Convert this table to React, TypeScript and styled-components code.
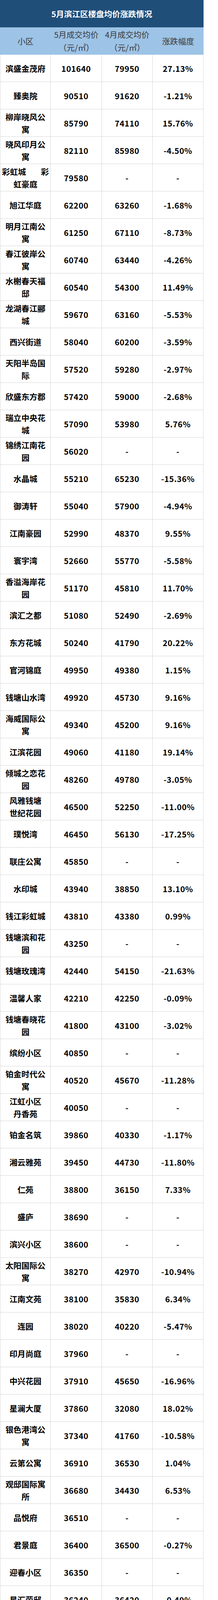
import React from 'react'
import styled, { createGlobalStyle } from 'styled-components'

const GlobalStyle = createGlobalStyle`
  html, body {
    margin: 0;
    padding: 0;
    background: #fff;
  }
  body {
    font-family: "Noto Sans CJK SC", "Noto Sans", sans-serif;
  }
  * {
    box-sizing: border-box;
  }
`

type Row = [string, string, string, string]

// name lines are split by \n; a full-width space spreads a line edge to edge
const rows: Row[] = [
  ['滨盛金茂府', '101640', '79950', '27.13%'],
  ['臻奥院', '90510', '91620', '-1.21%'],
  ['柳岸晓风公\n寓', '85790', '74110', '15.76%'],
  ['晓风印月公\n寓', '82110', '85980', '-4.50%'],
  ['彩虹城　彩\n虹豪庭', '79580', '-', '-'],
  ['旭江华庭', '62200', '63260', '-1.68%'],
  ['明月江南公\n寓', '61250', '67110', '-8.73%'],
  ['春江彼岸公\n寓', '60740', '63440', '-4.26%'],
  ['水榭春天福\n邸', '60540', '54300', '11.49%'],
  ['龙湖春江郦\n城', '59670', '63160', '-5.53%'],
  ['西兴街道', '58040', '60200', '-3.59%'],
  ['天阳半岛国\n际', '57520', '59280', '-2.97%'],
  ['欣盛东方郡', '57420', '59000', '-2.68%'],
  ['瑞立中央花\n城', '57090', '53980', '5.76%'],
  ['锦绣江南花\n园', '56020', '-', '-'],
  ['水晶城', '55210', '65230', '-15.36%'],
  ['御涛轩', '55040', '57900', '-4.94%'],
  ['江南豪园', '52990', '48370', '9.55%'],
  ['寰宇湾', '52660', '55770', '-5.58%'],
  ['香溢海岸花\n园', '51170', '45810', '11.70%'],
  ['滨汇之都', '51080', '52490', '-2.69%'],
  ['东方花城', '50240', '41790', '20.22%'],
  ['官河锦庭', '49950', '49380', '1.15%'],
  ['钱塘山水湾', '49920', '45730', '9.16%'],
  ['海威国际公\n寓', '49340', '45200', '9.16%'],
  ['江滨花园', '49060', '41180', '19.14%'],
  ['倾城之恋花\n园', '48260', '49780', '-3.05%'],
  ['风雅钱塘\n世纪花园', '46500', '52250', '-11.00%'],
  ['璞悦湾', '46450', '56130', '-17.25%'],
  ['联庄公寓', '45850', '-', '-'],
  ['水印城', '43940', '38850', '13.10%'],
  ['钱江彩虹城', '43810', '43380', '0.99%'],
  ['钱塘滨和花\n园', '43250', '-', '-'],
  ['钱塘玫瑰湾', '42440', '54150', '-21.63%'],
  ['温馨人家', '42210', '42250', '-0.09%'],
  ['钱塘春晓花\n园', '41800', '43100', '-3.02%'],
  ['缤纷小区', '40850', '-', '-'],
  ['铂金时代公\n寓', '40520', '45670', '-11.28%'],
  ['江虹小区\n丹香苑', '40050', '-', '-'],
  ['铂金名筑', '39860', '40330', '-1.17%'],
  ['湘云雅苑', '39450', '44730', '-11.80%'],
  ['仁苑', '38800', '36150', '7.33%'],
  ['盛庐', '38690', '-', '-'],
  ['滨兴小区', '38600', '-', '-'],
  ['太阳国际公\n寓', '38270', '42970', '-10.94%'],
  ['江南文苑', '38100', '35830', '6.34%'],
  ['连园', '38020', '40220', '-5.47%'],
  ['印月尚庭', '37960', '-', '-'],
  ['中兴花园', '37910', '45650', '-16.96%'],
  ['星澜大厦', '37860', '32080', '18.02%'],
  ['银色港湾公\n寓', '37340', '41760', '-10.58%'],
  ['云第公寓', '36910', '36530', '1.04%'],
  ['观邸国际寓\n所', '36680', '34430', '6.53%'],
  ['品悦府', '36510', '-', '-'],
  ['君景庭', '36400', '36500', '-0.27%'],
  ['迎春小区', '36350', '-', '-'],
  ['星汇荣邸', '36240', '36420', '-0.49%'],
  ['贺田尚城', '35950', '37380', '-3.83%'],
  ['天寓', '35870', '45650', '-21.42%'],
  ['新州花苑', '35710', '40380', '-11.57%'],
  ['白马湖和院', '35630', '35390', '0.68%'],
  ['锦绣玲珑府', '35450', '36840', '-3.77%'],
  ['缤纷北苑', '35370', '43420', '-18.54%'],
  ['风景蝶院', '34580', '34600', '-0.06%'],
  ['迎春南苑', '34100', '27650', '23.33%'],
  ['银爵世纪公\n寓', '33940', '30650', '10.73%'],
  ['盛元慧谷花\n园', '33760', '36340', '-7.10%'],
  ['浙新小区', '33610', '33360', '0.75%'],
  ['碧水豪园', '32810', '37640', '-12.83%'],
  ['春波小区', '32150', '33540', '-4.14%'],
  ['之江花园', '31920', '-', '-'],
  ['南岸晶都花\n园', '31840', '31450', '1.24%'],
  ['嘉凯城云上', '31490', '36240', '-13.11%'],
  ['金盛曼城', '30330', '35520', '-14.61%'],
  ['滨兴北苑', '29550', '36010', '-17.94%'],
  ['兴盛花园', '29460', '-', '-'],
  ['风情苑', '29150', '31850', '-8.48%'],
  ['钱塘景苑', '28620', '30630', '-6.56%'],
  ['逸天广场', '28430', '27230', '4.41%'],
  ['钱江湾花园', '27890', '36090', '-22.72%'],
  ['中兴和园', '27370', '26580', '2.97%'],
  ['白马湖小区\n白鹤苑', '26190', '-', '-'],
  ['星耀城', '25970', '-', '-'],
  ['滨文苑', '25370', '27690', '-8.38%'],
  ['杭州印', '23530', '25740', '-8.59%'],
  ['积家', '23440', '29670', '-21.00%'],
]

// one grid for the whole sheet: every band is a 70px row
const Sheet = styled.div`
  width: 521px;
  display: grid;
  grid-template-columns: repeat(4, minmax(0, 1fr));
  grid-auto-rows: 70px;
`

const Title = styled.div`
  grid-column: 1 / -1;
  display: flex;
  align-items: center;
  justify-content: center;
  background: #1f4e79;
  color: #fff;
  font-size: 20.5px;
  font-weight: 700;
  line-height: 1;
`

const HeadCell = styled.div`
  display: flex;
  flex-direction: column;
  align-items: center;
  justify-content: center;
  background: #9dc3e6;
  color: #3a3a3a;
  font-size: 20.5px;
  font-weight: 400;
  line-height: 33px;
  white-space: nowrap;
`

const Cell = styled.div<{ $name?: boolean }>`
  display: flex;
  flex-direction: column;
  align-items: center;
  justify-content: center;
  min-width: 0;
  padding: 0 ${({ $name }) => ($name ? '4px' : '0')};
  border-left: ${({ $name }) => ($name ? '1px solid #d6d6d6' : 'none')};
  border-right: 1px solid #d6d6d6;
  border-bottom: 1px solid #d6d6d6;
  color: #000;
  font-size: 20.5px;
  font-weight: 700;
  line-height: 32px;
  letter-spacing: ${({ $name }) => ($name ? '0' : '0.5px')};
  white-space: nowrap;
`

const Spread = styled.div`
  display: flex;
  justify-content: space-between;
  align-self: stretch;
`

const NameCell: React.FC<{ name: string }> = ({ name }) => (
  <Cell $name>
    {name.split('\n').map((line, i) =>
      line.includes('　') ? (
        <Spread key={i}>
          {line.split('　').map((part, j) => (
            <span key={j}>{part}</span>
          ))}
        </Spread>
      ) : (
        <div key={i}>{line}</div>
      )
    )}
  </Cell>
)

export default function App() {
  return (
    <>
      <GlobalStyle />
      <Sheet>
        <Title>5月滨江区楼盘均价涨跌情况</Title>
        <HeadCell>小区</HeadCell>
        <HeadCell>
          <div>5月成交均价</div>
          <div>（元/㎡）</div>
        </HeadCell>
        <HeadCell>
          <div>4月成交均价</div>
          <div>（元/㎡）</div>
        </HeadCell>
        <HeadCell>涨跌幅度</HeadCell>
        {rows.map(([name, may, apr, change]) => (
          <React.Fragment key={name}>
            <NameCell name={name} />
            <Cell>{may}</Cell>
            <Cell>{apr}</Cell>
            <Cell>{change}</Cell>
          </React.Fragment>
        ))}
      </Sheet>
    </>
  )
}
